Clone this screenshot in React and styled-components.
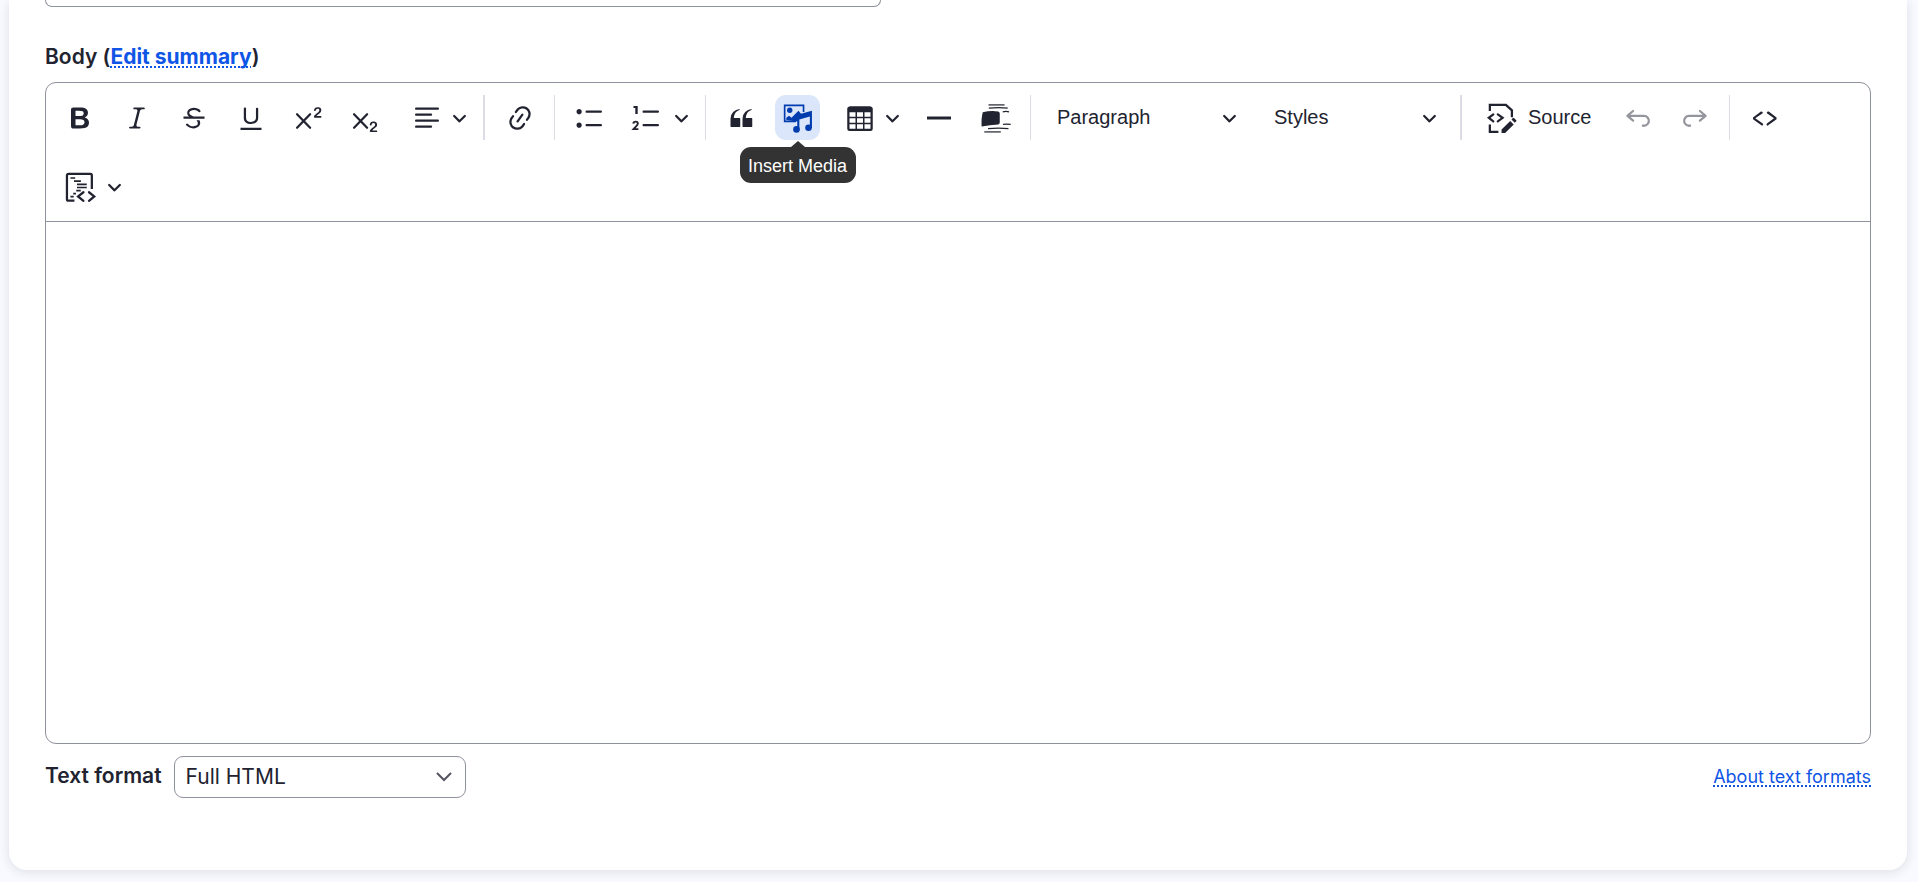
import React from "react";
import styled, { createGlobalStyle, css } from "styled-components";

const GlobalStyle = createGlobalStyle`
  * { box-sizing: border-box; }
  body {
    margin: 0;
    background: #f8faff;
    color: #222330;
    font-family: Inter, "Liberation Sans", sans-serif;
    font-size: 21px;
    line-height: 24px;
  }
`;

const Page = styled.main`
  padding: 0 11px 12px 9px;
`;

const Card = styled.section`
  padding: 0 36px 72px;
  background: #fff;
  border-radius: 0 0 18px 18px;
  box-shadow: 0 2px 12px rgba(34, 35, 48, 0.12);
`;

const TitleInput = styled.input`
  display: block;
  width: 46%;
  max-width: 836px;
  height: 7px;
  padding: 0 12px;
  border: 1px solid #8e929c;
  border-top: 0;
  border-radius: 0 0 10px 10px;
  background: #fff;
`;

const FieldLabel = styled.div`
  padding: 38px 0 13px;
  font-weight: 600;
`;

const TextLink = styled.a`
  color: #0f55e6;
  font-size: ${(p) => (p.$small ? "18px" : "21px")};
  font-weight: ${(p) => (p.$strong ? 700 : 400)};
  text-decoration: underline dotted 2px;
  text-underline-offset: 2px;
  text-decoration-skip-ink: none;
`;

const Editor = styled.div`
  border: 1px solid #8e929c;
  border-radius: 11px;
`;

const Toolbar = styled.div`
  display: flex;
  flex-wrap: wrap;
  gap: 24px 12px;
  padding: 12px 11px;
  border-bottom: 1px solid #8e929c;
`;

const Separator = styled.span`
  width: ${(p) => (p.$thick ? 2 : 1)}px;
  height: 45px;
  background: #dcdde4;
`;

const buttonReset = css`
  display: flex;
  align-items: center;
  height: 45px;
  padding: 0;
  border: 0;
  border-radius: 11px;
  background: transparent;
  color: inherit;
  font: 20px/24px "Liberation Sans", Arial, sans-serif;
`;

const ToolButton = styled.button`
  ${buttonReset}
  position: relative;
  justify-content: center;
  width: 45px;
  ${(p) => p.$active && "background: #dbe6fb; color: #003cad;"}
  &:disabled { color: #95969d; }
`;

const MenuButton = styled.button`
  ${buttonReset}
  gap: 10px;
  width: 72px;
  padding-left: 13px;
`;

const SplitGroup = styled.div`
  display: flex;
  width: 69px;
`;

const SplitArrow = styled.button`
  ${buttonReset}
  justify-content: center;
  width: 24px;
`;

const ListButton = styled.button`
  ${buttonReset}
  justify-content: space-between;
  width: ${(p) => p.$width}px;
  padding: 0 11px 0 14px;
`;

const SourceButton = styled.button`
  ${buttonReset}
  gap: 11px;
  width: 129px;
  padding-left: 13px;
`;

const ButtonText = styled.span`
  padding-bottom: 2px;
`;

const Tooltip = styled.span`
  position: absolute;
  top: 52px;
  left: 50%;
  z-index: 1;
  transform: translateX(-50%);
  width: 116px;
  padding-top: 2px;
  border-radius: 11px;
  background: #333;
  color: #fff;
  font-size: 18px;
  line-height: 34px;
  text-align: center;
  white-space: nowrap;
  &::before {
    content: "";
    position: absolute;
    bottom: 100%;
    left: 50%;
    margin-left: -7px;
    border: 7px solid transparent;
    border-top: 0;
    border-bottom: 6px solid #333;
  }
`;

const EditArea = styled.div`
  min-height: 521px;
  outline: 0;
`;

const FormatBar = styled.div`
  display: flex;
  align-items: center;
  padding-top: 12px;
`;

const FormatLabel = styled.label`
  margin-right: 12px;
  padding-bottom: 2px;
  font-weight: 600;
`;

const SelectWrap = styled.div`
  display: grid;
  align-items: center;
  margin-right: auto;
  svg {
    grid-area: 1 / 1;
    justify-self: end;
    margin-right: 14px;
    pointer-events: none;
  }
`;

const FormatSelect = styled.select`
  grid-area: 1 / 1;
  appearance: none;
  width: 292px;
  height: 42px;
  padding: 0 40px 0 11px;
  border: 1px solid #8e929c;
  border-radius: 9px;
  background: #fff;
  color: inherit;
  font: inherit;
`;

const TWO =
  "M15.677 8.678h2.549c.254 0 .447.05.58.152a.49.49 0 0 1 .201.413.54.54 0 0 1-.159.393c-.105.108-.266.162-.48.162h-3.594c-.245 0-.435-.066-.572-.197a.621.621 0 0 1-.205-.463c0-.114.044-.265.132-.453a1.62 1.62 0 0 1 .288-.444c.433-.436.824-.81 1.172-1.122.348-.312.597-.517.747-.615.267-.183.49-.368.667-.553.177-.185.312-.375.405-.57.093-.194.139-.384.139-.57a1.008 1.008 0 0 0-.554-.917 1.197 1.197 0 0 0-.56-.133c-.426 0-.761.182-1.005.546a2.332 2.332 0 0 0-.164.39 1.609 1.609 0 0 1-.258.488c-.096.114-.237.17-.423.17a.558.558 0 0 1-.405-.156.568.568 0 0 1-.161-.427c0-.218.05-.446.151-.683.101-.238.252-.453.452-.646s.454-.349.762-.467a2.998 2.998 0 0 1 1.081-.178c.498 0 .923.076 1.274.228a1.916 1.916 0 0 1 1.004 1.032 1.984 1.984 0 0 1-.156 1.794c-.2.32-.405.572-.613.754-.208.182-.558.468-1.048.857-.49.39-.826.691-1.008.906a2.703 2.703 0 0 0-.24.309z";

const CROSS = <path d="M2.7 7.500l8.700 9M11.400 7.500l-8.700 9" fill="none" stroke="currentColor" strokeWidth="1.500" strokeLinecap="round" />;

const ICONS = {
  bold: <path d="M10.187 17H5.773c-.637 0-1.092-.138-1.364-.415-.273-.277-.409-.718-.409-1.323V4.738c0-.617.14-1.062.419-1.332.279-.27.73-.406 1.354-.406h4.68c.69 0 1.288.041 1.793.124.506.083.96.242 1.36.478.341.197.644.447.906.75a3.262 3.262 0 0 1 .808 2.162c0 1.401-.722 2.426-2.167 3.075C15.05 10.175 16 11.315 16 13.01a3.756 3.756 0 0 1-2.296 3.504 6.1 6.1 0 0 1-1.517.377c-.571.073-1.238.11-2 .11zm-.217-6.217H7v4.087h3.069c1.977 0 2.965-.69 2.965-2.072 0-.707-.256-1.22-.768-1.537-.512-.319-1.277-.478-2.296-.478zM7 5.13v3.619h2.606c.729 0 1.292-.067 1.69-.2a1.6 1.6 0 0 0 .91-.765c.165-.267.247-.566.247-.897 0-.707-.26-1.176-.778-1.409-.519-.232-1.31-.348-2.375-.348H7z" />,
  italic: <path d="m9.586 14.633.021.004c-.036.335.095.655.393.962.082.083.173.15.274.201h1.474a.6.6 0 1 1 0 1.2H5.304a.6.6 0 0 1 0-1.2h1.15c.474-.07.809-.182 1.005-.334.157-.122.291-.32.404-.597l2.416-9.55a1.053 1.053 0 0 0-.281-.823 1.12 1.12 0 0 0-.442-.296H8.15a.6.6 0 0 1 0-1.2h6.443a.6.6 0 1 1 0 1.2h-1.195c-.376.056-.65.155-.823.296-.215.175-.423.439-.623.79l-2.366 9.347z" />,
  strike: <path d="M7 16.4c-.8-.4-1.5-.9-2.2-1.5a.6.6 0 0 1-.2-.5l.3-.6h1c1 1.2 2.1 1.7 3.7 1.7 1 0 1.8-.3 2.3-.6.6-.4.6-1.2.6-1.3.2-1.2-.9-2.1-.9-2.1h2.1c.3.7.4 1.2.4 1.7v.8l-.6 1.2c-.6.8-1.1 1-1.6 1.2a6 6 0 0 1-2.4.6c-1 0-1.8-.3-2.5-.6zM6.8 9L6 8.3c-.4-.5-.5-.8-.5-1.6 0-.7.1-1.3.5-1.8.4-.6 1-1 1.6-1.3a6.3 6.3 0 0 1 4.7 0 4 4 0 0 1 1.7 1l.3.7c0 .1.2.4-.2.7-.4.2-.9.1-1 0a3 3 0 0 0-1.2-1c-.4-.2-1-.3-2-.4-.7 0-1.4.2-2 .6-.8.6-1 .8-1 1.5 0 .8.5 1 1.2 1.5.6.4 1.1.7 1.9 1H6.8zM3 10.5V9h14v1.5z" />,
  underline: <path d="M3 18v-1.5h14V18H3zm2.2-8V3.6c0-.4.4-.6.8-.6.3 0 .7.2.7.6v6.2c0 2 1.3 2.8 3.2 2.8 1.9 0 3.4-.9 3.4-2.9V3.6c0-.3.4-.5.8-.5.3 0 .7.2.7.5V10c0 2.7-2.2 4-4.9 4-2.6 0-4.7-1.2-4.7-4z" />,
  superscript: <>{CROSS}<path d={TWO} /></>,
  subscript: <>{CROSS}<path d={TWO} transform="translate(-.8 9.6)" /></>,
  align: <path d="M2 3.75c0 .414.336.75.75.75h14.5a.75.75 0 1 0 0-1.5H2.75a.75.75 0 0 0-.75.75zm0 8c0 .414.336.75.75.75h14.5a.75.75 0 1 0 0-1.5H2.75a.75.75 0 0 0-.75.75zm0 4c0 .414.336.75.75.75h9.929a.75.75 0 1 0 0-1.5H2.75a.75.75 0 0 0-.75.75zm0-8c0 .414.336.75.75.75h9.929a.75.75 0 1 0 0-1.5H2.75a.75.75 0 0 0-.75.75z" />,
  link: <path d="m11.077 15 .991-1.416a.75.75 0 1 1 1.229.86l-1.148 1.64a.748.748 0 0 1-.217.206 5.251 5.251 0 0 1-8.503-5.955.741.741 0 0 1 .12-.274l1.147-1.639a.75.75 0 1 1 1.228.86L4.933 10.7l.006.003a3.75 3.75 0 0 0 6.132 4.294l.006.004zm5.494-5.335a.748.748 0 0 1-.12.274l-1.147 1.639a.75.75 0 1 1-1.228-.86l.86-1.23a3.75 3.75 0 0 0-6.144-4.301l-.86 1.229a.75.75 0 0 1-1.229-.86l1.148-1.64a.748.748 0 0 1 .217-.206 5.251 5.251 0 0 1 8.503 5.955zm-4.563-2.532a.75.75 0 0 1 .184 1.045l-3.155 4.505a.75.75 0 1 1-1.229-.86l3.155-4.506a.75.75 0 0 1 1.045-.184z" />,
  bullets: <path d="M7 5.75c0 .414.336.75.75.75h9.5a.75.75 0 1 0 0-1.5h-9.5a.75.75 0 0 0-.75.75zm-6 0C1 4.784 1.777 4 2.75 4c.966 0 1.75.777 1.75 1.75 0 .966-.777 1.75-1.75 1.75C1.784 7.5 1 6.723 1 5.75zm6 9c0 .414.336.75.75.75h9.5a.75.75 0 1 0 0-1.5h-9.5a.75.75 0 0 0-.75.75zm-6 0c0-.966.777-1.75 1.75-1.75.966 0 1.75.777 1.75 1.75 0 .966-.777 1.75-1.75 1.75-.966 0-1.75-.777-1.75-1.75z" />,
  numbers: (
    <>
      <path d="M7 5.75c0 .414.336.75.75.75h9.5a.75.75 0 1 0 0-1.5h-9.5a.75.75 0 0 0-.75.75zM3.8 2v5.400H2.200V3.300H1V2zM7 14.75a.75.75 0 0 1 .75-.75h9.5a.75.75 0 1 1 0 1.5h-9.5a.75.75 0 0 1-.75-.75z" />
      <path d="M.9 13.700c.2-1.700 3-1.700 3 0 0 1.300-1.500 2-2.900 3.700h3.300" fill="none" stroke="currentColor" strokeWidth="1.300" />
    </>
  ),
  quote: <path d="M3 10.423a6.5 6.5 0 0 1 6.056-6.408l.038.67C6.448 5.423 5.354 7.663 5.22 10H9c.552 0 .5.432.5.986v4.511c0 .554-.448.503-1 .503h-5c-.552 0-.5-.449-.5-1.003v-4.574zm8 0a6.5 6.5 0 0 1 6.056-6.408l.038.67c-2.646.739-3.74 2.979-3.873 5.315H17c.552 0 .5.432.5.986v4.511c0 .554-.448.503-1 .503h-5c-.552 0-.5-.449-.5-1.003v-4.574z" />,
  media: (
    <>
      <path d="M13.700 6V1.600H1.100v10.600h7.500" fill="none" stroke="currentColor" strokeWidth="1.100" />
      <circle cx="4.500" cy="4.800" r="1.800" />
      <path d="M2.200 11.400v-1.500l1.800-1.400 1.700 1.300 1.600-1.600 3-3 1.700 1.900 7.300-1.900v11.400h-1.400V9l-7 2v6.600H9.500v-5.200z" />
      <circle cx="9" cy="17.600" r="2.200" />
      <circle cx="17" cy="16.500" r="2.200" />
    </>
  ),
  table: <path transform="translate(0 .7)" d="M3 5.500v3h4v-3H3Zm0 4v3h4v-3H3Zm0 4v3h4v-3H3Zm5 3h4v-3H8v3Zm5 0h4v-3h-4v3Zm4-4v-3h-4v3h4Zm0-4v-3h-4v3h4Zm1.500 8A1.500 1.500 0 0 1 17 18H3a1.500 1.500 0 0 1-1.500-1.500V3c.222-.863 1.068-1.500 2-1.500h13c.932 0 1.778.637 2 1.500v13.500Zm-6.500-4v-3H8v3h4Zm0-4v-3H8v3h4Z" />,
  rule: <path d="M2 9h16v2H2z" />,
  template: (
    <>
      <path d="M1.200 6.200Q6 4.900 11.500 5.600q1 .4 1 1.400v6q0 1-1 1.300Q6 14.800.4 15.600.100 10 1.200 6.200z" />
      <path d="M5.200 3.400Q12 2.700 17.800 3.400M14.500 5.900q2-.6 4.200 0M14.700 14.300q2.500-.5 5.100 0M4.700 17.100q7-.7 13.600 0" fill="none" stroke="currentColor" strokeWidth=".8" />
      <path d="M5 1.200h10.700M2.200 19.300h11" fill="none" stroke="currentColor" strokeWidth="1.200" opacity=".7" />
    </>
  ),
  source: (
    <>
      <path d="M1.900 5.300V1.200h10.700l4 3.700v4.600M1.900 14.300v4.900h5.700" fill="none" stroke="currentColor" strokeWidth="1.500" />
      <path d="M4.200 7.600 1.200 9.900l3 2.300M7.200 7.600l3.200 2.300-3.200 2.300" fill="none" stroke="currentColor" strokeWidth="1.500" strokeLinecap="round" />
      <path d="m15.500 12 2.300 2.300-5.700 5.700H9.700v-2.400zM18 10l1.500 1.500a.5.500 0 0 1 0 .7l-1 1-2.200-2.200 1-1a.5.500 0 0 1 .7 0z" />
    </>
  ),
  undo: <path d="m5.042 9.367 2.189 1.837a.75.75 0 0 1-.965 1.149l-3.788-3.180a.747.747 0 0 1-.210-.284.750.750 0 0 1 .170-.945L6.230 4.762a.750.750 0 1 1 .964 1.150L4.863 7.866h8.917A.750.750 0 0 1 14 7.900a4 4 0 1 1-1.477 7.718l.344-1.489a2.500 2.500 0 1 0 1.094-4.730l.008-.032H5.042z" />,
  redo: <path d="m14.958 9.367-2.189 1.837a.75.75 0 0 0 .965 1.149l3.788-3.180a.747.747 0 0 0 .210-.284.750.750 0 0 0-.170-.945L13.770 4.762a.750.750 0 1 0-.964 1.150l2.331 1.955H6.220A.750.750 0 0 0 6 7.900a4 4 0 1 0 1.477 7.718l-.344-1.489A2.500 2.500 0 1 1 6.039 9.400l-.008-.032h8.927z" />,
  code: <path d="m12.500 5.700 5.200 3.900v1.300l-5.600 4c-.1.200-.3.200-.5.200-.3-.1-.6-.7-.6-1l.3-.4 4.700-3.500L11.500 7l-.2-.2c-.1-.3-.1-.6 0-.8.2-.2.5-.4.8-.4a.8.8 0 0 1 .4.1zm-5.200 0L2 9.600v1.300l5.600 4c.1.200.3.200.5.200.3-.1.700-.7.600-1 0-.1 0-.3-.2-.4l-5-3.500L8.200 7l.2-.2c.1-.3.1-.6 0-.8-.2-.2-.5-.4-.8-.4a.8.8 0 0 0-.3.100z" />,
  codeBlock: (
    <g fill="none" stroke="currentColor">
      <path d="M6.300 19.100H2.300a1 1 0 0 1-1-1V2.300a1 1 0 0 1 1-1h14.600a1 1 0 0 1 1 1v9" strokeWidth="1.500" />
      <path d="M3.600 4h3.200M6 6.100h4.600M8 8.200h6.500M8 10.300h6.500M7.500 12.400h3M5.500 14.400h1.800M3.600 16.400h2.200" strokeWidth="1.100" />
      <path d="m12.300 13.500-3.600 2.800 3.600 2.900M16 13.500l3.500 2.800-3.500 2.900" strokeWidth="1.500" strokeLinecap="round" />
    </g>
  ),
};

const Icon = ({ name }) => (
  <svg width="30" height="30" viewBox="0 0 20 20" fill="currentColor" overflow="visible" aria-hidden="true">
    {ICONS[name]}
  </svg>
);

const Chevron = () => (
  <svg width="15" height="15" viewBox="0 0 10 10" fill="currentColor" aria-hidden="true">
    <path d="M.941 4.523a.75.75 0 1 1 1.060-1.060l3.006 3.005 3.005-3.005a.75.75 0 1 1 1.060 1.060l-3.549 3.550a.75.75 0 0 1-1.168-.136L.941 4.523z" />
  </svg>
);

const Tool = ({ icon, label, ...rest }) => (
  <ToolButton type="button" aria-label={label} {...rest}>
    <Icon name={icon} />
  </ToolButton>
);

const Menu = ({ icon, label }) => (
  <MenuButton type="button" aria-label={label} aria-haspopup="true">
    <Icon name={icon} />
    <Chevron />
  </MenuButton>
);

const Split = ({ icon, label }) => (
  <SplitGroup>
    <Tool icon={icon} label={label} />
    <SplitArrow type="button" aria-label={`${label} options`}>
      <Chevron />
    </SplitArrow>
  </SplitGroup>
);

export default function App() {
  return (
    <>
      <GlobalStyle />
      <Page>
        <Card>
          <TitleInput type="text" aria-label="Title" />
          <FieldLabel>
            Body (<TextLink href="#summary" $strong>Edit summary</TextLink>)
          </FieldLabel>
          <Editor>
            <Toolbar role="toolbar" aria-label="Editor toolbar">
              <Tool icon="bold" label="Bold" />
              <Tool icon="italic" label="Italic" />
              <Tool icon="strike" label="Strikethrough" />
              <Tool icon="underline" label="Underline" />
              <Tool icon="superscript" label="Superscript" />
              <Tool icon="subscript" label="Subscript" />
              <Menu icon="align" label="Text alignment" />
              <Separator $thick />
              <Tool icon="link" label="Link" />
              <Separator />
              <Tool icon="bullets" label="Bulleted List" />
              <Split icon="numbers" label="Numbered List" />
              <Separator />
              <Tool icon="quote" label="Block quote" />
              <ToolButton type="button" $active>
                <Icon name="media" />
                <Tooltip>Insert Media</Tooltip>
              </ToolButton>
              <Menu icon="table" label="Insert table" />
              <Tool icon="rule" label="Horizontal line" />
              <Tool icon="template" label="Insert template" />
              <Separator />
              <ListButton type="button" $width={205}>
                <ButtonText>Paragraph</ButtonText>
                <Chevron />
              </ListButton>
              <ListButton type="button" $width={188}>
                <ButtonText>Styles</ButtonText>
                <Chevron />
              </ListButton>
              <Separator $thick />
              <SourceButton type="button">
                <Icon name="source" />
                <ButtonText>Source</ButtonText>
              </SourceButton>
              <Tool icon="undo" label="Undo" disabled />
              <Tool icon="redo" label="Redo" disabled />
              <Separator />
              <Tool icon="code" label="Code" />
              <Split icon="codeBlock" label="Insert code block" />
            </Toolbar>
            <EditArea contentEditable suppressContentEditableWarning role="textbox" aria-label="Body" />
          </Editor>
          <FormatBar>
            <FormatLabel htmlFor="text-format">Text format</FormatLabel>
            <SelectWrap>
              <FormatSelect id="text-format" defaultValue="full">
                <option value="full">Full HTML</option>
              </FormatSelect>
              <svg width="16" height="10" viewBox="0 0 16 10" fill="none" stroke="#545560" strokeWidth="2" aria-hidden="true">
                <path d="m1 1 7 7 7-7" />
              </svg>
            </SelectWrap>
            <TextLink href="#formats" $small>About text formats</TextLink>
          </FormatBar>
        </Card>
      </Page>
    </>
  );
}
